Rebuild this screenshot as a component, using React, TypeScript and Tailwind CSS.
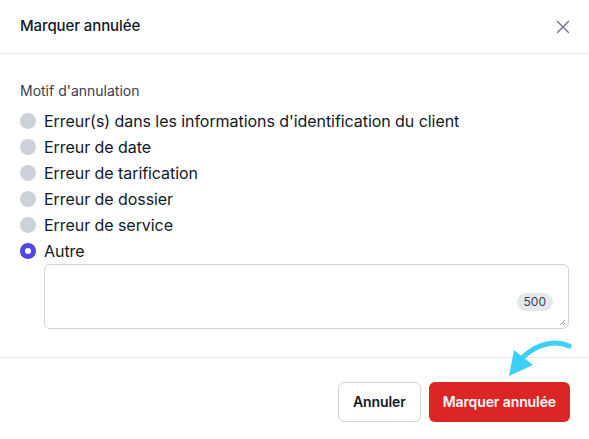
import { useState } from "react";

const reasons = [
  "Erreur(s) dans les informations d'identification du client",
  "Erreur de date",
  "Erreur de tarification",
  "Erreur de dossier",
  "Erreur de service",
  "Autre",
];

function Radio({ checked }: { checked: boolean }) {
  return checked ? (
    <span className="w-4 h-4 rounded-full border-[5px] border-[#4f46e5] bg-white shrink-0" />
  ) : (
    <span className="w-4 h-4 rounded-full bg-[#cdd2da] shrink-0" />
  );
}

export default function App() {
  const [selected, setSelected] = useState("Autre");

  return (
    <div className="relative w-[589px] h-[439px] bg-white text-[#111827] font-['Inter',sans-serif] overflow-hidden">
      {/* Header */}
      <div className="flex items-center justify-between h-[54px] px-5 border-b border-[#e5e7eb]">
        <h2 className="text-[15px] font-medium tracking-[-0.1px]">Marquer annulée</h2>
        <button className="text-[#6b7280] -mr-[1px]">
          <svg width="14" height="14" viewBox="0 0 14 14" fill="none" stroke="currentColor" strokeWidth="1.4" strokeLinecap="round">
            <path d="M1.5 1.5l11 11M12.5 1.5l-11 11" />
          </svg>
        </button>
      </div>

      {/* Body */}
      <div className="px-5 pt-[27px] pb-[28px] border-b border-[#e5e7eb]">
        <div className="text-sm leading-5 text-[#374151]">Motif d'annulation</div>
        <div className="flex flex-col mt-[7px]">
          {reasons.map((r) => (
            <label key={r} onClick={() => setSelected(r)} className="flex items-center gap-2 h-[26px] cursor-pointer">
              <Radio checked={selected === r} />
              <span className="text-base leading-6 tracking-[-0.06px]">{r}</span>
            </label>
          ))}
        </div>
        <div className="relative ml-6 h-[65px] rounded-md border border-[#cbd5e1]">
          <textarea className="w-full h-full resize-none bg-transparent outline-none px-3 py-2 text-sm" />
          <span className="absolute right-[15px] bottom-[17px] h-[18px] px-[7px] rounded-full bg-[#e5e7eb] text-xs leading-[18px] text-[#374151]">
            500
          </span>
          <svg className="absolute right-[2px] bottom-[2px]" width="8" height="8" viewBox="0 0 8 8" stroke="#6b7280" strokeWidth="0.8">
            <path d="M7 2L2 7M7 5L5 7" />
          </svg>
        </div>
      </div>

      {/* Footer */}
      <div className="flex justify-end gap-2 px-[19px] pt-6">
        <button className="h-10 px-[14px] rounded-md border border-[#d1d5db] bg-white text-sm font-semibold tracking-[-0.1px] text-[#111827]">
          Annuler
        </button>
        <button className="h-10 px-[14px] rounded-md bg-[#dc2626] text-sm font-semibold tracking-[-0.1px] text-white">
          Marquer annulée
        </button>
      </div>

      {/* Pointer arrow */}
      <svg className="absolute left-0 top-0 pointer-events-none" width="589" height="439" viewBox="0 0 589 439">
        <path d="M569 346 C 556 340 538 343 523 357" fill="none" stroke="#3cd0f6" strokeWidth="5" strokeLinecap="round" />
        <path d="M509 376 L514 350 L533 365 Z" fill="#3cd0f6" />
      </svg>
    </div>
  );
}
